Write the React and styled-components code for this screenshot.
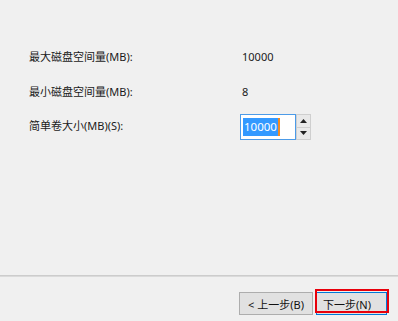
import React from 'react';
import styled, { createGlobalStyle } from 'styled-components';

const GlobalStyle = createGlobalStyle`
  html, body {
    margin: 0;
    padding: 0;
    background: #f0f0f0;
  }
  body {
    font-family: "Noto Sans", "Noto Sans CJK SC", sans-serif;
    font-size: 11px;
    color: #1a1a1a;
  }
`;

const Page = styled.div`
  width: 398px;
  height: 321px;
  display: flex;
  flex-direction: column;
  background: #f0f0f0;
  overflow: hidden;
`;

const Content = styled.div`
  height: 275px;
  padding: 44px 0 0 29px;
  box-sizing: border-box;
`;

const FieldGrid = styled.div`
  display: grid;
  grid-template-columns: 211px auto;
  grid-auto-rows: 26px;
  row-gap: 9px;
  align-items: center;
`;

const Label = styled.div`
  line-height: 14px;
  margin-top: ${(props) => props.shift || 0}px;
`;

const Value = styled.div`
  line-height: 14px;
  padding-left: 2px;
`;

const SpinBox = styled.div`
  display: flex;
  height: 26px;
`;

const Field = styled.div`
  width: 56px;
  height: 26px;
  box-sizing: border-box;
  border: 1px solid #4c9be8;
  background: #fff;
  display: flex;
  align-items: center;
  padding-left: 2px;
`;

const Selected = styled.span`
  background: #3399ff;
  color: #fff;
  font-size: 11.5px;
  line-height: 18px;
  padding: 0 1px;
`;

const Caret = styled.span`
  width: 2px;
  height: 18px;
  background: #f08a24;
`;

const Arrows = styled.div`
  width: 15px;
  display: flex;
  flex-direction: column;
  gap: 1px;
  background: #cfcfcf;
  padding: 1px;
  box-sizing: border-box;
`;

const Arrow = styled.div`
  flex: 1;
  background: #e9e9e9;
  display: flex;
  align-items: center;
  justify-content: center;
`;

const Footer = styled.div`
  flex: 1;
  border-top: 1px solid #cccccc;
  box-shadow: inset 0 1px 0 #dadada;
  display: flex;
  justify-content: flex-end;
  align-items: flex-start;
  padding: 16px 11px 0 0;
  gap: 3px;
`;

const Button = styled.div`
  position: relative;
  width: ${(props) => props.w}px;
  height: 23px;
  box-sizing: border-box;
  background: #e1e1e1;
  border: 1px solid ${(props) => (props.primary ? '#0078d7' : '#adadad')};
  display: flex;
  align-items: center;
  justify-content: ${(props) => (props.primary ? 'flex-start' : 'center')};
  padding-left: ${(props) => (props.primary ? 6 : 0)}px;
  font-size: 11px;
  color: #111;
`;

const Highlight = styled.div`
  position: absolute;
  left: -2px;
  top: -4px;
  width: 74px;
  height: 24px;
  box-sizing: border-box;
  border: 2px solid #e8000b;
  pointer-events: none;
`;

function Triangle({ up }) {
  return (
    <svg width="7" height="4" viewBox="0 0 7 4">
      <path d={up ? 'M0 4 L3.5 0 L7 4 Z' : 'M0 0 L3.5 4 L7 0 Z'} fill="#222" />
    </svg>
  );
}

export default function App() {
  return (
    <Page>
      <GlobalStyle />
      <Content>
        <FieldGrid>
          <Label>最大磁盘空间量(MB):</Label>
          <Value>10000</Value>
          <Label>最小磁盘空间量(MB):</Label>
          <Value>8</Value>
          <Label shift={-3}>简单卷大小(MB)(S):</Label>
          <SpinBox>
            <Field>
              <Selected>10000</Selected>
              <Caret />
            </Field>
            <Arrows>
              <Arrow>
                <Triangle up />
              </Arrow>
              <Arrow>
                <Triangle />
              </Arrow>
            </Arrows>
          </SpinBox>
        </FieldGrid>
      </Content>
      <Footer>
        <Button w={74}>&lt; 上一步(B)</Button>
        <Button w={71} primary>
          下一步(N)
          <Highlight />
        </Button>
      </Footer>
    </Page>
  );
}
